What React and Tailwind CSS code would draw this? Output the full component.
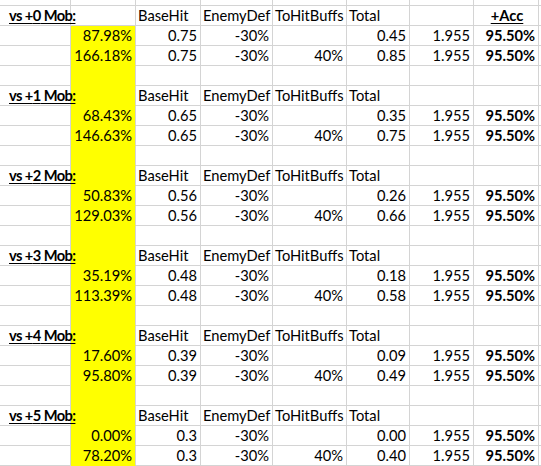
const groups = [
  { n: 0, rows: [["87.98%", "0.75", "-30%", "", "0.45"], ["166.18%", "0.75", "-30%", "40%", "0.85"]] },
  { n: 1, rows: [["68.43%", "0.65", "-30%", "", "0.35"], ["146.63%", "0.65", "-30%", "40%", "0.75"]] },
  { n: 2, rows: [["50.83%", "0.56", "-30%", "", "0.26"], ["129.03%", "0.56", "-30%", "40%", "0.66"]] },
  { n: 3, rows: [["35.19%", "0.48", "-30%", "", "0.18"], ["113.39%", "0.48", "-30%", "40%", "0.58"]] },
  { n: 4, rows: [["17.60%", "0.39", "-30%", "", "0.09"], ["95.80%", "0.39", "-30%", "40%", "0.49"]] },
  { n: 5, rows: [["0.00%", "0.3", "-30%", "", "0.00"], ["78.20%", "0.3", "-30%", "40%", "0.40"]] },
];

const cell = "h-[20px] border-r border-b border-[#d4d4d4] leading-[19px] whitespace-nowrap";
const yellow = "h-[20px] border-r border-b border-r-[#d4d4d4] border-b-[#ffff00] bg-[#ffff00] leading-[19px] whitespace-nowrap";

function Cell({ children, right, bold, className = "" }) {
  return (
    <div className={`${cell} ${right ? "text-right pr-[3px]" : "pl-[2px]"} ${bold ? "font-bold" : ""} ${className}`}>
      {children}
    </div>
  );
}

function HeaderRow({ n }) {
  return (
    <>
      <div className={`${cell} pl-[9px] font-bold relative z-10 overflow-visible`}>
        <span className="underline underline-offset-[2px] decoration-[1px] tracking-[-0.6px]">vs +{n} Mob:</span>
      </div>
      <div className={n === 0 ? cell : yellow}></div>
      <Cell>BaseHit</Cell>
      <Cell>EnemyDef</Cell>
      <Cell>ToHitBuffs</Cell>
      <Cell>Total</Cell>
      <Cell></Cell>
      <Cell bold className="text-center">
        {n === 0 && <span className="underline underline-offset-[2px] decoration-[1px]">+Acc</span>}
      </Cell>
      <Cell></Cell>
    </>
  );
}

function DataRow({ r }) {
  return (
    <>
      <Cell></Cell>
      <div className={`${yellow} text-right pr-[3px]`}>{r[0]}</div>
      <Cell right>{r[1]}</Cell>
      <Cell right>{r[2]}</Cell>
      <Cell right>{r[3]}</Cell>
      <Cell right>{r[4]}</Cell>
      <Cell right>1.955</Cell>
      <Cell right bold>95.50%</Cell>
      <Cell></Cell>
    </>
  );
}

function BlankRow() {
  return (
    <>
      <Cell></Cell>
      <div className={yellow}></div>
      <Cell></Cell>
      <Cell></Cell>
      <Cell></Cell>
      <Cell></Cell>
      <Cell></Cell>
      <Cell></Cell>
      <Cell></Cell>
    </>
  );
}

export default function App() {
  return (
    <div
      className="w-[541px] h-[466px] overflow-hidden bg-white text-black text-[14.7px]"
      style={{ fontFamily: "Lato, 'Liberation Sans', sans-serif" }}
    >
      <div className="grid grid-cols-[71px_65px_65px_72px_74px_63px_64px_65px_1fr]">
        {Array.from({ length: 9 }).map((_, i) => (
          <div key={i} className="h-[6px] border-r border-b border-[#d4d4d4]"></div>
        ))}
        {groups.map((g, gi) => (
          <div key={g.n} className="contents">
            <HeaderRow n={g.n} />
            <DataRow r={g.rows[0]} />
            <DataRow r={g.rows[1]} />
            {gi < groups.length - 1 && <BlankRow />}
          </div>
        ))}
      </div>
    </div>
  );
}
